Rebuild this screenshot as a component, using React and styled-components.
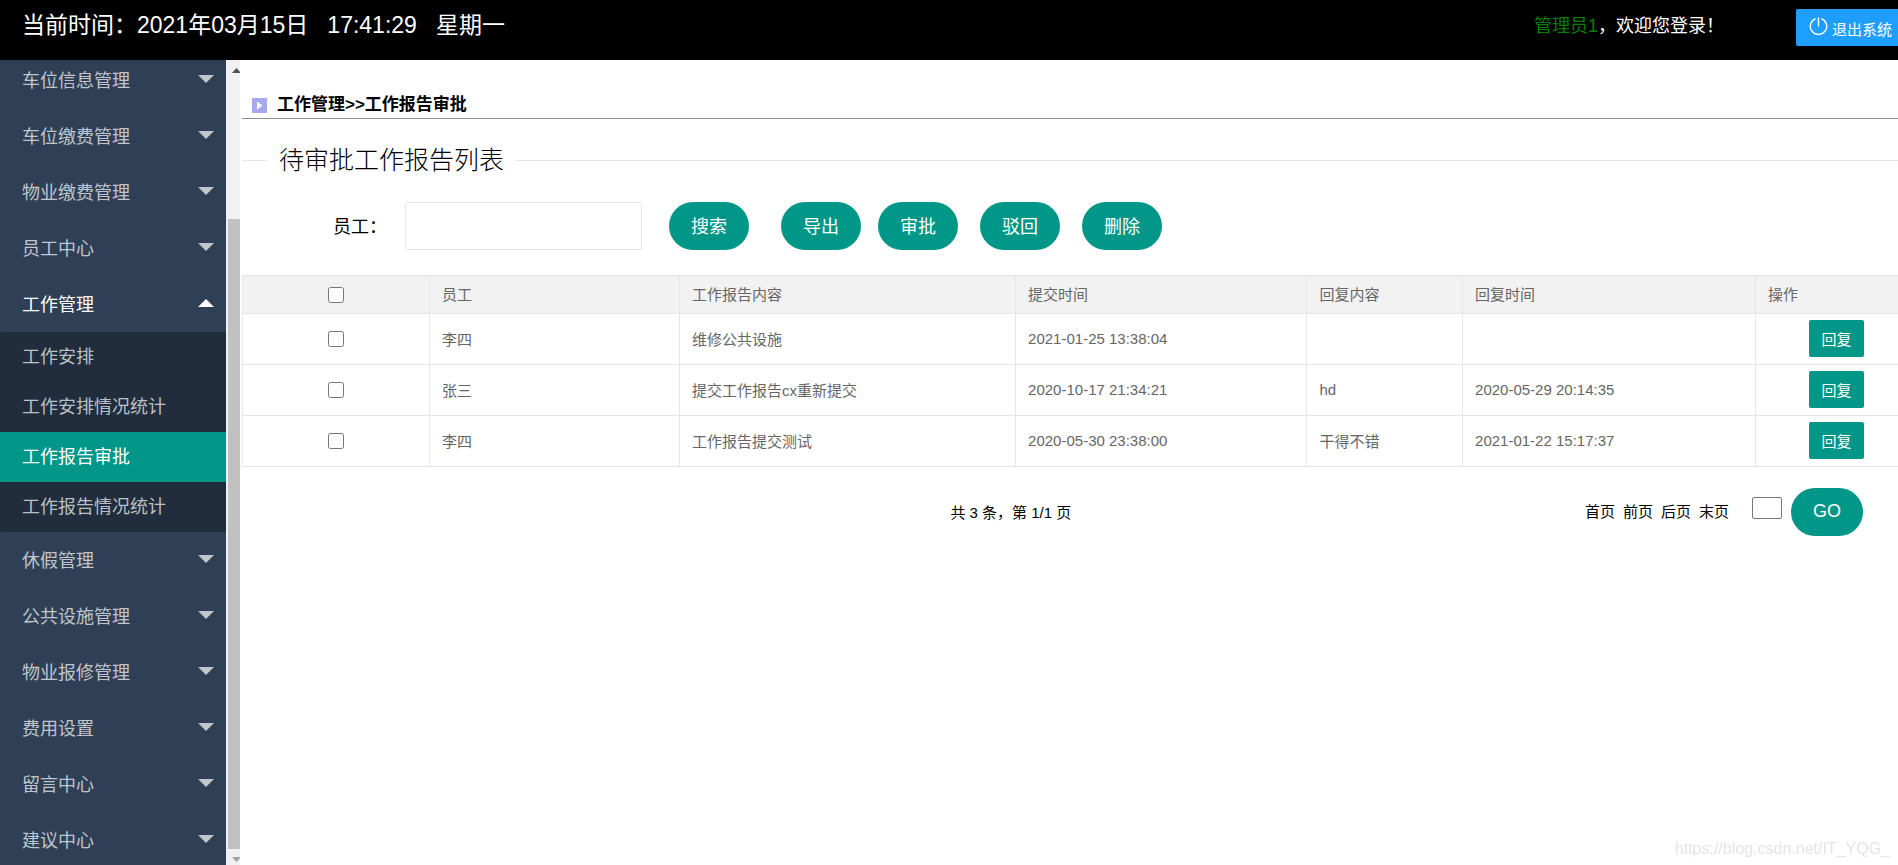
import { useState } from "react";
import styled, { createGlobalStyle } from "styled-components";

const GlobalStyle = createGlobalStyle`
  * {
    box-sizing: border-box;
  }

  body {
    margin: 0;
    background: #fff;
    color: #000;
    font-family: "Liberation Sans", "Noto Sans CJK SC", sans-serif;
    font-size: 15px;
  }

  button,
  input {
    font-family: inherit;
  }

  a {
    color: inherit;
    text-decoration: none;
  }
`;

const Layout = styled.div`
  display: flex;
  flex-direction: column;
  height: 100vh;
  overflow: hidden;
`;

const Header = styled.header`
  display: flex;
  align-items: flex-start;
  flex-shrink: 0;
  height: 60px;
  padding: 9px 0 0 22px;
  background: #000;
  color: #fff;
`;

const Clock = styled.div`
  display: flex;
  gap: 19px;
  font-size: 23px;
  line-height: 32px;
`;

const Welcome = styled.div`
  margin-left: auto;
  padding-right: 72px;
  font-size: 18px;
  line-height: 34px;
`;

const UserName = styled.span`
  color: #008000;
`;

const LogoutButton = styled.button`
  display: flex;
  align-items: center;
  gap: 4px;
  height: 37px;
  padding: 2px 6px 0 13px;
  border: none;
  border-radius: 2px 0 0 2px;
  background: #1e9fff;
  color: #fff;
  font-size: 15px;
  cursor: pointer;

  svg {
    margin-bottom: 4px;
  }
`;

const Body = styled.div`
  display: flex;
  flex: 1;
  min-height: 0;
`;

const Sidebar = styled.nav`
  flex-shrink: 0;
  width: 226px;
  overflow: hidden;
  background: #2f4056;
`;

/* the list is scrolled down a little under the header */
const MenuList = styled.ul`
  margin: -8px 0 0;
  padding: 0;
  list-style: none;
`;

const MenuButton = styled.button`
  display: flex;
  align-items: center;
  justify-content: space-between;
  width: 100%;
  height: 56px;
  padding: 0 12px 3px 22px;
  border: none;
  background: none;
  color: ${(props) => (props.$open ? "#fff" : "#c1c6cc")};
  font-size: 18px;
  cursor: pointer;
`;

const Caret = styled.span`
  border: 8px solid transparent;
  border-width: ${(props) => (props.$open ? "0 8px 8px" : "8px 8px 0")};
  border-top-color: ${(props) => (props.$open ? "transparent" : "#c1c6cc")};
  border-bottom-color: ${(props) => (props.$open ? "#fff" : "transparent")};
`;

const SubMenu = styled.ul`
  margin: 0;
  padding: 0;
  border-radius: 2px;
  background: #212d3c;
  list-style: none;
`;

const SubLink = styled.a`
  display: block;
  padding-left: 22px;
  background: ${(props) => (props.$active ? "#009688" : "transparent")};
  color: ${(props) => (props.$active ? "#fff" : "#bcc0c4")};
  font-size: 18px;
  line-height: 50px;
`;

const ScrollTrack = styled.div`
  display: flex;
  flex-direction: column;
  flex-shrink: 0;
  width: 14px;
  overflow: hidden;
  padding-left: 2px;
  background: #f1f1f1;
`;

const ScrollArrow = styled.span`
  flex-shrink: 0;
  height: 16px;
  padding: 8px 0 0 4px;
  line-height: 0;
  color: ${(props) => (props.$dim ? "#a3a3a3" : "#505050")};
`;

const ScrollSpace = styled.div`
  flex: 18;
`;

const ScrollThumb = styled.div`
  flex: 79;
  background: #c1c1c1;
`;

const Main = styled.main`
  flex: 1;
  min-width: 0;
  padding-left: 2px;
`;

const Breadcrumb = styled.div`
  display: flex;
  align-items: flex-end;
  gap: 10px;
  height: 59px;
  padding: 0 0 1px 10px;
  border-bottom: 1px solid #8f8f8f;
`;

const BreadcrumbIcon = styled.svg`
  margin-bottom: 4px;
`;

const BreadcrumbText = styled.h1`
  margin: 0;
  font-size: 17px;
  font-weight: 700;
  line-height: 24px;
`;

const ReportSet = styled.fieldset`
  margin: 23px 0 0;
  padding: 0;
  border: none;
  border-top: 1px solid #e6e6e6;
  min-width: 0;
`;

const ReportLegend = styled.legend`
  margin-left: 25px;
  padding: 0 12px;
  font-size: 25px;
  font-weight: 300;
  line-height: 36px;
`;

const SearchForm = styled.form`
  display: flex;
  align-items: center;
  padding: 24px 0 25px 91px;
`;

const SearchLabel = styled.label`
  width: 72px;
  padding-bottom: 2px;
  font-size: 18px;
`;

const SearchInput = styled.input`
  width: 237px;
  height: 48px;
  margin-right: 27px;
  padding: 0 12px;
  border: 1px solid #e6e6e6;
  border-radius: 2px;
  font-size: 18px;
`;

const ButtonGroup = styled.div`
  display: flex;
  gap: 22px;
  margin-left: 17px;
`;

const RoundButton = styled.button`
  height: 48px;
  padding: 0 22px 2px;
  border: none;
  border-radius: 24px;
  background: #009688;
  color: #fff;
  font-size: 18px;
  cursor: pointer;
`;

const ExportButton = styled(RoundButton)`
  margin-left: 32px;
`;

const Table = styled.table`
  width: 100%;
  border-collapse: collapse;
  table-layout: fixed;
  color: #666;
  font-size: 15px;
`;

const Col = styled.col`
  width: ${(props) => props.$width};
`;

const HeadRow = styled.tr`
  height: 38px;
  background: #f2f2f2;
`;

const Row = styled.tr`
  height: 51px;
`;

const Th = styled.th`
  padding: 0 12px 2px;
  border: 1px solid #e6e6e6;
  border-right: none;
  font-weight: 400;
  text-align: ${(props) => props.$align || "left"};
`;

const Td = styled.td`
  padding: 0 12px 2px;
  border: 1px solid #e6e6e6;
  border-right: none;
  text-align: ${(props) => props.$align || "left"};
`;

const ActionTd = styled(Td)`
  padding-right: 34px;
  text-align: right;
`;

const Checkbox = styled.input`
  display: inline-block;
  width: 16px;
  height: 16px;
  margin: 0;
  vertical-align: middle;
`;

const ReplyButton = styled.button`
  width: 55px;
  height: 37px;
  padding: 0;
  border: none;
  border-radius: 2px;
  background: #009688;
  color: #fff;
  font-size: 15px;
  vertical-align: middle;
  cursor: pointer;
`;

const Footer = styled.div`
  display: flex;
  align-items: center;
  padding: 21px 35px 0 0;
`;

const Summary = styled.div`
  margin-left: 43.7%;
  padding-bottom: 2px;
`;

const Pager = styled.div`
  display: flex;
  align-items: center;
  gap: 8px;
  margin-left: auto;
`;

const PageLink = styled.a`
  padding-bottom: 4px;
`;

const PageInput = styled.input`
  width: 30px;
  height: 22px;
  margin: 0 1px 8px 15px;
  padding: 1px 2px;
  border: 1px solid #767676;
  border-radius: 2px;
`;

const Watermark = styled.div`
  position: fixed;
  right: 8px;
  bottom: 6px;
  color: #e4e4e4;
  font-size: 16px;
  line-height: 20px;
`;

const menus = [
  { name: "车位信息管理" },
  { name: "车位缴费管理" },
  { name: "物业缴费管理" },
  { name: "员工中心" },
  {
    name: "工作管理",
    children: [
      "工作安排",
      "工作安排情况统计",
      "工作报告审批",
      "工作报告情况统计",
    ],
  },
  { name: "休假管理" },
  { name: "公共设施管理" },
  { name: "物业报修管理" },
  { name: "费用设置" },
  { name: "留言中心" },
  { name: "建议中心" },
];

const reports = [
  {
    id: 1,
    staff: "李四",
    content: "维修公共设施",
    submittedAt: "2021-01-25 13:38:04",
    reply: "",
    repliedAt: "",
  },
  {
    id: 2,
    staff: "张三",
    content: "提交工作报告cx重新提交",
    submittedAt: "2020-10-17 21:34:21",
    reply: "hd",
    repliedAt: "2020-05-29 20:14:35",
  },
  {
    id: 3,
    staff: "李四",
    content: "工作报告提交测试",
    submittedAt: "2020-05-30 23:38:00",
    reply: "干得不错",
    repliedAt: "2021-01-22 15:17:37",
  },
];

const PowerIcon = () => (
  <svg width="19" height="19" viewBox="0 0 19 19" fill="none" aria-hidden="true">
    <path
      d="M6.6 1.6A8.2 8.2 0 1 0 12.4 1.6M9.5 0.5V9.5"
      stroke="#fff"
      strokeWidth="1.4"
    />
  </svg>
);

const SideMenu = () => {
  const [opened, setOpened] = useState("工作管理");
  const [current, setCurrent] = useState("工作报告审批");

  return (
    <Sidebar>
      <MenuList>
        {menus.map(({ name, children }) => {
          const open = opened === name;
          return (
            <li key={name}>
              <MenuButton
                type="button"
                $open={open}
                aria-expanded={open}
                onClick={() => setOpened(open ? "" : name)}
              >
                {name}
                <Caret $open={open} />
              </MenuButton>
              {open && children && (
                <SubMenu>
                  {children.map((child) => (
                    <li key={child}>
                      <SubLink
                        href="#"
                        $active={current === child}
                        onClick={() => setCurrent(child)}
                      >
                        {child}
                      </SubLink>
                    </li>
                  ))}
                </SubMenu>
              )}
            </li>
          );
        })}
      </MenuList>
    </Sidebar>
  );
};

const SideScroll = () => (
  <ScrollTrack aria-hidden="true">
    <ScrollArrow>
      <svg width="9" height="5" viewBox="0 0 9 5" fill="currentColor">
        <path d="M0 5 4.5 0 9 5z" />
      </svg>
    </ScrollArrow>
    <ScrollSpace />
    <ScrollThumb />
    <ScrollArrow $dim>
      <svg width="9" height="5" viewBox="0 0 9 5" fill="currentColor">
        <path d="M0 0 4.5 5 9 0z" />
      </svg>
    </ScrollArrow>
  </ScrollTrack>
);

const ReportTable = () => {
  const [checked, setChecked] = useState([]);
  const allChecked = checked.length === reports.length;

  const toggle = (id) =>
    setChecked((prev) =>
      prev.includes(id) ? prev.filter((item) => item !== id) : [...prev, id]
    );

  return (
    <Table>
      <colgroup>
        <Col $width="11.3%" />
        <Col $width="15.1%" />
        <Col $width="20.3%" />
        <Col $width="17.6%" />
        <Col $width="9.4%" />
        <Col $width="17.7%" />
        <Col $width="8.6%" />
      </colgroup>
      <thead>
        <HeadRow>
          <Th $align="center">
            <Checkbox
              type="checkbox"
              aria-label="全选"
              checked={allChecked}
              onChange={() =>
                setChecked(allChecked ? [] : reports.map((r) => r.id))
              }
            />
          </Th>
          <Th>员工</Th>
          <Th>工作报告内容</Th>
          <Th>提交时间</Th>
          <Th>回复内容</Th>
          <Th>回复时间</Th>
          <Th>操作</Th>
        </HeadRow>
      </thead>
      <tbody>
        {reports.map((report) => (
          <Row key={report.id}>
            <Td $align="center">
              <Checkbox
                type="checkbox"
                aria-label={report.content}
                checked={checked.includes(report.id)}
                onChange={() => toggle(report.id)}
              />
            </Td>
            <Td>{report.staff}</Td>
            <Td>{report.content}</Td>
            <Td>{report.submittedAt}</Td>
            <Td>{report.reply}</Td>
            <Td>{report.repliedAt}</Td>
            <ActionTd>
              <ReplyButton type="button">回复</ReplyButton>
            </ActionTd>
          </Row>
        ))}
      </tbody>
    </Table>
  );
};

const App = () => {
  return (
    <>
      <GlobalStyle />
      <Layout>
        <Header>
          <Clock>
            <span>当前时间：2021年03月15日</span>
            <span>17:41:29</span>
            <span>星期一</span>
          </Clock>
          <Welcome>
            <UserName>管理员1</UserName>，欢迎您登录！
          </Welcome>
          <LogoutButton type="button">
            <PowerIcon />
            退出系统
          </LogoutButton>
        </Header>

        <Body>
          <SideMenu />
          <SideScroll />
          <Main>
            <Breadcrumb>
              <BreadcrumbIcon
                width="15"
                height="15"
                viewBox="0 0 15 15"
                aria-hidden="true"
              >
                <rect width="15" height="15" fill="#a8a8f0" />
                <path d="M5 3.5 10.5 7.5 5 11.5z" fill="#fff" />
              </BreadcrumbIcon>
              <BreadcrumbText>工作管理&gt;&gt;工作报告审批</BreadcrumbText>
            </Breadcrumb>

            <ReportSet>
              <ReportLegend>待审批工作报告列表</ReportLegend>
              <SearchForm onSubmit={(e) => e.preventDefault()}>
                <SearchLabel htmlFor="staff">员工：</SearchLabel>
                <SearchInput id="staff" type="text" />
                <RoundButton type="submit">搜索</RoundButton>
                <ExportButton type="button">导出</ExportButton>
                <ButtonGroup>
                  <RoundButton type="button">审批</RoundButton>
                  <RoundButton type="button">驳回</RoundButton>
                  <RoundButton type="button">删除</RoundButton>
                </ButtonGroup>
              </SearchForm>
            </ReportSet>

            <ReportTable />

            <Footer>
              <Summary>共 3 条，第 1/1 页</Summary>
              <Pager>
                <PageLink href="#">首页</PageLink>
                <PageLink href="#">前页</PageLink>
                <PageLink href="#">后页</PageLink>
                <PageLink href="#">末页</PageLink>
                <PageInput type="text" aria-label="页码" />
                <RoundButton type="button">GO</RoundButton>
              </Pager>
            </Footer>
          </Main>
        </Body>
      </Layout>
      <Watermark>https://blog.csdn.net/IT_YQG_</Watermark>
    </>
  );
};

export default App;
